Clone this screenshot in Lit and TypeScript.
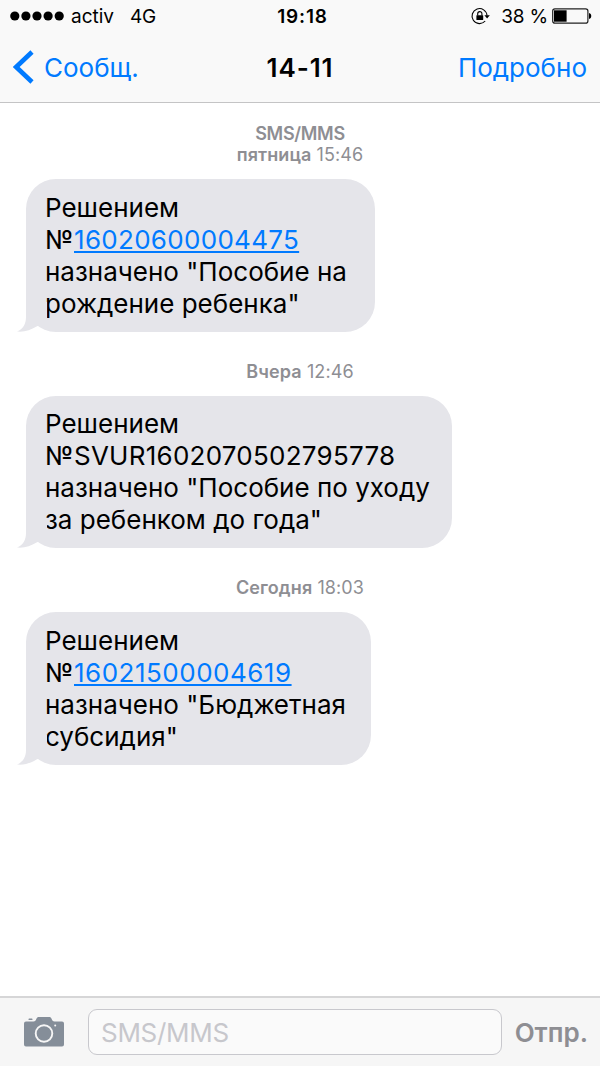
import {LitElement, html, css, svg, nothing} from 'lit';
import {customElement, property} from 'lit/decorators.js';
import {styleMap} from 'lit/directives/style-map.js';

interface Message {
  service?: string;
  day: string;
  time: string;
  number: string;
  link: boolean;
  text: string[];
  width: number;
  tracking: number;
}

const MESSAGES: Message[] = [
  {
    service: 'SMS/MMS',
    day: 'пятница',
    time: '15:46',
    number: '16020600004475',
    link: true,
    text: ['назначено "Пособие на', 'рождение ребенка"'],
    width: 349,
    tracking: 0.3,
  },
  {
    day: 'Вчера',
    time: '12:46',
    number: 'SVUR1602070502795778',
    link: false,
    text: ['назначено "Пособие по уходу', 'за ребенком до года"'],
    width: 426,
    tracking: 0.25,
  },
  {
    day: 'Сегодня',
    time: '18:03',
    number: '16021500004619',
    link: true,
    text: ['назначено "Бюджетная', 'субсидия"'],
    width: 345,
    tracking: 0.5,
  },
];

@customElement('status-bar')
export class StatusBar extends LitElement {
  static styles = css`
    :host {
      display: grid;
      grid-template-columns: 1fr auto 1fr;
      align-items: center;
      height: 32px;
      padding: 0 8px 0 10px;
      font-size: 19px;
      color: #000;
    }

    .side {
      display: flex;
      align-items: center;
    }

    .right {
      justify-content: flex-end;
    }

    .dots {
      width: 54px;
      height: 10px;
      margin-right: 7px;
    }

    .network {
      margin-left: 16px;
      letter-spacing: -0.3px;
    }

    .time {
      font-weight: 600;
      letter-spacing: 0.8px;
      padding-left: 3px;
    }

    .lock {
      width: 20px;
      height: 18px;
      margin-right: 11px;
    }

    .percent {
      letter-spacing: -0.2px;
    }

    .battery {
      width: 40px;
      height: 16px;
      margin-left: 4px;
    }
  `;

  render() {
    return html`
      <div class="side">
        <svg class="dots" viewBox="0 0 54 10">
          ${[0, 1, 2, 3, 4].map(
            (i) => svg`<circle cx=${4.8 + i * 11.1} cy="5" r="4.6" />`
          )}
        </svg>
        <span>activ</span>
        <span class="network">4G</span>
      </div>
      <div class="time">19:18</div>
      <div class="side right">
        <svg class="lock" viewBox="0 0 20 18">
          <path
            d="M15.200 14A7.500 7.500 0 1 1 17 8.600"
            fill="none"
            stroke="#000"
            stroke-width="1.1"
          />
          <path d="M14.400 8.300h5.400L17.100 11.600z" />
          <rect x="6.400" y="8.200" width="6.800" height="4.900" rx="0.5" />
          <path
            d="M7.700 8.600V6.700a2.100 2.100 0 0 1 4.200 0V8.600"
            fill="none"
            stroke="#000"
            stroke-width="1.1"
          />
        </svg>
        <span class="percent">38 %</span>
        <svg class="battery" viewBox="0 0 40 16">
          <rect
            x="0.7"
            y="0.9"
            width="35.200"
            height="14.200"
            rx="2.200"
            fill="none"
            stroke="#222"
            stroke-width="1.2"
          />
          <rect x="2" y="2.300" width="12.600" height="11.400" />
          <path d="M37 5c3 .6 3 5.400 0 6z" />
        </svg>
      </div>
    `;
  }
}

@customElement('nav-bar')
export class NavBar extends LitElement {
  static styles = css`
    :host {
      display: grid;
      grid-template-columns: 1fr auto 1fr;
      align-items: center;
      height: 70px;
      padding: 0 13px;
      font-size: 26px;
    }

    .back {
      display: flex;
      align-items: center;
      color: #007aff;
    }

    .chevron {
      width: 21px;
      height: 34px;
      margin-right: 10px;
    }

    .title {
      font-weight: 600;
      letter-spacing: 0.9px;
    }

    .details {
      justify-self: end;
      color: #007aff;
    }
  `;

  render() {
    return html`
      <div class="back">
        <svg class="chevron" viewBox="0 0 21 34">
          <path
            d="M19 2L3.200 17 19 32"
            fill="none"
            stroke="#007aff"
            stroke-width="4.6"
          />
        </svg>
        <span>Сообщ.</span>
      </div>
      <div class="title">14-11</div>
      <div class="details">Подробно</div>
    `;
  }
}

@customElement('message-bubble')
export class MessageBubble extends LitElement {
  @property({attribute: false}) message!: Message;

  static styles = css`
    :host {
      display: block;
    }

    .stamp {
      text-align: center;
      font-size: 18px;
      line-height: 21px;
      letter-spacing: 0.1px;
      color: #8e8e93;
    }

    .strong {
      font-weight: 600;
    }

    .service {
      letter-spacing: -0.3px;
    }

    .bubble {
      position: relative;
      box-sizing: border-box;
      margin: 14px 0 0 26px;
      padding: 12.5px 0 12px 19px;
      border-radius: 30px;
      background: #e5e5ea;
      font-size: 26px;
      line-height: 32px;
      white-space: nowrap;
    }

    .numero {
      letter-spacing: 0.6px;
    }

    .link {
      color: #007aff;
      text-decoration: underline;
      text-decoration-thickness: 2px;
      text-underline-offset: 2px;
    }

    .tail {
      position: absolute;
      left: -9px;
      bottom: 0;
      width: 40px;
      height: 30px;
    }
  `;

  render() {
    const {service, day, time, number, link, text, width, tracking} =
      this.message;
    return html`
      <div class="stamp">
        ${service
          ? html`<div class="strong service">${service}</div>`
          : nothing}
        <span class="strong">${day}</span> ${time}
      </div>
      <div class="bubble" style=${styleMap({width: `${width}px`})}>
        <svg class="tail" viewBox="0 0 40 30">
          <path
            d="M9 0V15C9 22 6 27 0 29.500C7 30.300 14 28 19.500 24.500L30 20V0z"
            fill="#e5e5ea"
          />
        </svg>
        <div>Решением</div>
        <div>
          <span class="numero">№</span><span
            class=${link ? 'link' : 'number'}
            style=${styleMap({letterSpacing: `${tracking}px`})}
            >${number}</span
          >
        </div>
        ${text.map((line) => html`<div>${line}</div>`)}
      </div>
    `;
  }
}

@customElement('compose-bar')
export class ComposeBar extends LitElement {
  static styles = css`
    :host {
      display: flex;
      align-items: center;
      box-sizing: border-box;
      height: 70px;
      padding: 0 12px 0 24px;
      border-top: 2px solid #d6d6d7;
      background: #f6f6f6;
    }

    .camera {
      flex: none;
      width: 40px;
      height: 31px;
      margin: 0 24px 1px 0;
    }

    .field {
      flex: none;
      box-sizing: border-box;
      width: 414px;
      height: 46px;
      padding-left: 12px;
      border: 1px solid #c8c8cd;
      border-radius: 9px;
      background: #fafafa;
      color: #c7c7cc;
      font-size: 26px;
      line-height: 45px;
      letter-spacing: -0.3px;
    }

    .send {
      margin-left: auto;
      color: #8e8e93;
      font-size: 26px;
      font-weight: 600;
    }
  `;

  render() {
    return html`
      <svg class="camera" viewBox="0 0 40 31">
        <path
          d="M2 5.500h7.500c1.500 0 2-.6 2.600-1.900C12.900 1.600 13.600 1 15 1h10c1.400 0 2.100.6 2.900 2.600.6 1.300 1.100 1.900 2.600 1.900H38a2 2 0 0 1 2 2V28.500a2 2 0 0 1-2 2H2a2 2 0 0 1-2-2V7.500a2 2 0 0 1 2-2z"
          fill="#858e99"
        />
        <rect x="4.500" y="2.600" width="4" height="1.500" rx="0.7" fill="#858e99" />
        <circle cx="20" cy="17.500" r="8.300" fill="none" stroke="#f6f6f6" stroke-width="1.9" />
        <circle cx="31.200" cy="9.500" r="1" fill="#f6f6f6" />
      </svg>
      <div class="field">SMS/MMS</div>
      <div class="send">Отпр.</div>
    `;
  }
}

@customElement('app-root')
export class AppRoot extends LitElement {
  static styles = css`
    :host {
      display: flex;
      flex-direction: column;
      height: 1066px;
      overflow: hidden;
      background: #fff;
      color: #000;
      font-family: Inter, Roboto, 'Liberation Sans', sans-serif;
    }

    header {
      border-bottom: 1px solid #c4c4c5;
      background: #f9f9f9;
    }

    main {
      flex: 1;
      display: flex;
      flex-direction: column;
      gap: 29px;
      padding-top: 20px;
    }
  `;

  render() {
    return html`
      <header>
        <status-bar></status-bar>
        <nav-bar></nav-bar>
      </header>
      <main>
        ${MESSAGES.map(
          (message) => html`<message-bubble .message=${message}></message-bubble>`
        )}
      </main>
      <compose-bar></compose-bar>
    `;
  }
}
